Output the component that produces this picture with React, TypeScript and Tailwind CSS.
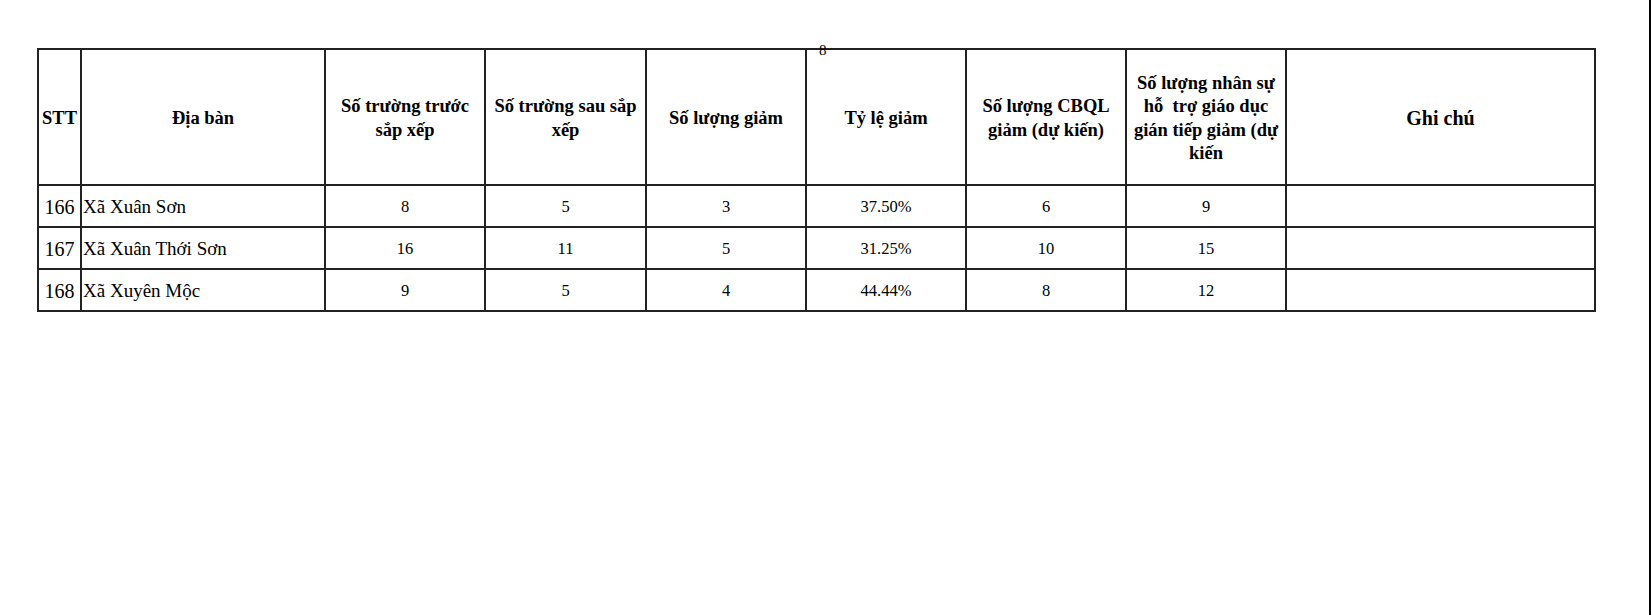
const headers: { lines: string[]; size?: string }[] = [
  { lines: ["STT"] },
  { lines: ["Địa bàn"] },
  { lines: ["Số trường trước", "sắp xếp"] },
  { lines: ["Số trường sau sắp", "xếp"] },
  { lines: ["Số lượng giảm"] },
  { lines: ["Tỷ lệ giảm"] },
  { lines: ["Số lượng CBQL", "giảm (dự kiến)"] },
  { lines: ["Số lượng nhân sự", "hỗ  trợ giáo dục", "gián tiếp giảm (dự", "kiến"] },
  { lines: ["Ghi chú"], size: "text-[20px]" },
];

const widths = ["w-[43px]", "w-[244px]", "w-[160px]", "w-[161px]", "w-[160px]", "w-[160px]", "w-[160px]", "w-[160px]", "w-[309px]"];

const rows = [
  { stt: 166, name: "Xã Xuân Sơn", before: 8, after: 5, diff: 3, rate: "37.50%", cbql: 6, staff: 9 },
  { stt: 167, name: "Xã Xuân Thới Sơn", before: 16, after: 11, diff: 5, rate: "31.25%", cbql: 10, staff: 15 },
  { stt: 168, name: "Xã Xuyên Mộc", before: 9, after: 5, diff: 4, rate: "44.44%", cbql: 8, staff: 12 },
];

const cell = "border-2 border-[#222] text-center align-middle p-0";

export default function App() {
  return (
    <div
      className="relative h-[615px] w-[1651px] bg-white text-black"
      style={{ fontFamily: '"Liberation Serif", "Times New Roman", serif' }}
    >
      <div className="h-full w-[1651px] border-r-2 border-black pl-[37px] pt-[48px]">
        <table className="w-[1558px] table-fixed border-collapse">
          <colgroup>
            {widths.map((w, i) => (
              <col key={i} className={w} />
            ))}
          </colgroup>
          <thead>
            <tr className="h-[136px]">
              {headers.map((h, i) => (
                <th key={i} className={`${cell} ${h.size ?? "text-[18.5px]"} pt-[3px] font-bold leading-[23.5px] whitespace-pre`}>
                  {h.lines.map((l, j) => (
                    <div key={j}>{l}</div>
                  ))}
                </th>
              ))}
            </tr>
          </thead>
          <tbody>
            {rows.map((r) => (
              <tr key={r.stt} className="h-[42px]">
                <td className={`${cell} pt-[2px] text-[20px]`}>{r.stt}</td>
                <td className="border-2 border-[#222] p-0 pt-[2px] pl-[1px] text-left align-middle text-[19px]">{r.name}</td>
                <td className={`${cell} pt-[2px] text-[16.5px]`}>{r.before}</td>
                <td className={`${cell} pt-[2px] text-[16.5px]`}>{r.after}</td>
                <td className={`${cell} pt-[2px] text-[16.5px]`}>{r.diff}</td>
                <td className={`${cell} pt-[2px] text-[16.5px]`}>{r.rate}</td>
                <td className={`${cell} pt-[2px] text-[16.5px]`}>{r.cbql}</td>
                <td className={`${cell} pt-[2px] text-[16.5px]`}>{r.staff}</td>
                <td className={cell}></td>
              </tr>
            ))}
          </tbody>
        </table>
      </div>
      <div className="absolute left-[819px] top-[43px] text-[15px] leading-none">8</div>
    </div>
  );
}
